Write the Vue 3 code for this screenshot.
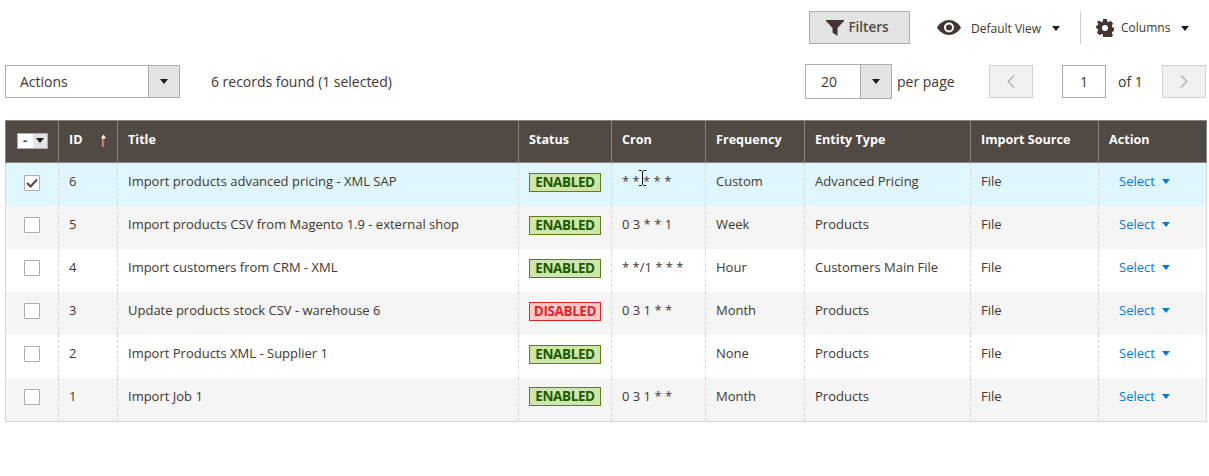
<template>
  <div class="grid-page">
    <div class="toolbar-top">
      <button class="btn-filters">
        <svg class="filter-icon" width="18" height="16" viewBox="0 0 18 16"><path d="M0 0h18v1l-6.500 7v8L6.500 12.500V8L0 1z" fill="#41362f" /></svg>
        Filters
      </button>
      <div class="view-switch">
        <svg width="24" height="15" viewBox="0 0 24 15"><path d="M12 0C7 0 2.500 3.200 0 7.500 2.500 11.800 7 15 12 15s9.500-3.200 12-7.500C21.500 3.200 17 0 12 0z" fill="#41362f" /><circle cx="12" cy="7.500" r="5" fill="#fff" /><circle cx="12" cy="7.500" r="3" fill="#41362f" /></svg>
        <span class="view-label">Default View</span>
        <span class="caret"></span>
      </div>
      <div class="columns-switch">
        <svg width="18" height="18" viewBox="0 0 18 18"><path d="M7 0h4l.5 2.500 1.500.7 2.200-1.400 2.800 2.800-1.400 2.200.6 1.500 2.300.7v3l-2.300.7-.6 1.500 1.400 2.200-2.800 2.800-2.200-1.400-1.500.6L11 18H7l-.5-2.500-1.500-.6-2.200 1.400L0 13.500l1.400-2.200-.6-1.500L-1 9V7l1.800-.7.6-1.500L0 2.600 2.800 1.800 5 3.200l1.500-.7z" transform="translate(1 0) scale(.89 1)" fill="#41362f" /><circle cx="9" cy="9" r="3" fill="#fff" /></svg>
        <span class="view-label">Columns</span>
        <span class="caret"></span>
      </div>
    </div>

    <div class="toolbar-bottom">
      <div class="actions-select">
        <span class="actions-label">Actions</span>
        <span class="select-arrow"><span class="caret"></span></span>
      </div>
      <div class="records">6 records found (1 selected)</div>
      <div class="pager">
        <div class="perpage-select">
          <span class="perpage-value">20</span>
          <span class="select-arrow"><span class="caret"></span></span>
        </div>
        <span class="perpage-label">per page</span>
        <button class="page-btn">
          <svg width="8" height="13" viewBox="0 0 8 13"><path d="M7 .5 1.200 6.500 7 12.500" fill="none" stroke="#b5b0ac" stroke-width="1.400" /></svg>
        </button>
        <div class="page-input">1</div>
        <span class="page-of">of 1</span>
        <button class="page-btn page-next">
          <svg width="8" height="13" viewBox="0 0 8 13"><path d="M1 .5 6.800 6.500 1 12.500" fill="none" stroke="#b5b0ac" stroke-width="1.400" /></svg>
        </button>
      </div>
    </div>

    <table class="data-grid">
      <colgroup>
        <col v-for="w in colWidths" :key="w.key" :style="{ width: w.width + 'px' }" />
      </colgroup>
      <thead>
        <tr>
          <th class="th-check">
            <span class="mass-select"><span class="mass-dash">-</span><span class="mass-arrow"><span class="caret"></span></span></span>
          </th>
          <th class="th-id">
            ID
            <svg class="sort-arrow" width="7" height="13" viewBox="0 0 7 13"><path d="M3 13V2" stroke="#fff" stroke-width="1" fill="none" /><path d="M4 13V2" stroke="#e22626" stroke-width="1" fill="none" /><path d="M1 4.500 3.500.5 6 4.500z" fill="#fff" /></svg>
          </th>
          <th>Title</th>
          <th>Status</th>
          <th>Cron</th>
          <th>Frequency</th>
          <th>Entity Type</th>
          <th>Import Source</th>
          <th>Action</th>
        </tr>
      </thead>
      <tbody>
        <tr v-for="(job, i) in jobs" :key="job.id" :class="{ selected: job.checked, odd: i % 2 === 1 && !job.checked }">
          <td class="td-check">
            <span class="checkbox">
              <svg v-if="job.checked" width="12" height="10" viewBox="0 0 12 10"><path d="M1 5l3.500 3.500L11 1.500" fill="none" stroke="#514943" stroke-width="2" /></svg>
            </span>
          </td>
          <td>{{ job.id }}</td>
          <td>{{ job.title }}</td>
          <td class="td-status"><span class="status" :class="job.enabled ? 'on' : 'off'">{{ job.enabled ? 'ENABLED' : 'DISABLED' }}</span></td>
          <td>{{ job.cron }}</td>
          <td>{{ job.frequency }}</td>
          <td>{{ job.entity }}</td>
          <td>File</td>
          <td class="td-action">Select<span class="caret-blue"></span></td>
        </tr>
      </tbody>
    </table>

    <svg class="ibeam" width="9" height="16" viewBox="0 0 9 16"><path d="M1 .5h2.500L4.500 1.500 5.500.5H8M4.500 1.500v13M1 15.500h2.500l1-1 1 1H8" fill="none" stroke="#111" stroke-width="1" /></svg>
  </div>
</template>

<script setup>
const colWidths = [53, 59, 401, 93, 94, 99, 166, 128, 108].map((width, key) => ({ width, key }))

const jobs = [
  { id: 6, checked: true, title: 'Import products advanced pricing - XML SAP', enabled: true, cron: '* * * * *', frequency: 'Custom', entity: 'Advanced Pricing' },
  { id: 5, title: 'Import products CSV from Magento 1.9 - external shop', enabled: true, cron: '0 3 * * 1', frequency: 'Week', entity: 'Products' },
  { id: 4, title: 'Import customers from CRM - XML', enabled: true, cron: '* */1 * * *', frequency: 'Hour', entity: 'Customers Main File' },
  { id: 3, title: 'Update products stock CSV - warehouse 6', enabled: false, cron: '0 3 1 * *', frequency: 'Month', entity: 'Products' },
  { id: 2, title: 'Import Products XML - Supplier 1', enabled: true, cron: '', frequency: 'None', entity: 'Products' },
  { id: 1, title: 'Import Job 1', enabled: true, cron: '0 3 1 * *', frequency: 'Month', entity: 'Products' },
]
</script>

<style scoped>
.grid-page {
  position: relative;
  width: 1209px;
  height: 476px;
  overflow: hidden;
  background: #fff;
  font-family: "Open Sans", "Liberation Sans", sans-serif;
  font-size: 13px;
  color: #41362f;
  box-sizing: border-box;
  padding-top: 11px;
}

.caret {
  display: inline-block;
  width: 0;
  height: 0;
  border-left: 4.500px solid transparent;
  border-right: 4.500px solid transparent;
  border-top: 5px solid #1a1a1a;
}

.toolbar-top {
  display: flex;
  align-items: center;
  height: 33px;
  padding-left: 809px;
}

.btn-filters {
  display: flex;
  align-items: center;
  justify-content: center;
  gap: 4px;
  width: 101px;
  height: 33px;
  box-sizing: border-box;
  border: 1px solid #adadad;
  background: #e3e3e3;
  font: 600 13.500px "Open Sans", sans-serif;
  color: #514943;
  padding: 0 4px 2px 0;
}

.filter-icon {
  margin-top: 3px;
}

.view-switch {
  display: flex;
  align-items: center;
  margin-left: 27px;
  width: 144px;
  height: 33px;
  border-right: 1px solid #ccc;
  box-sizing: border-box;
}

.view-switch .view-label {
  margin-left: 10px;
  font-size: 12px;
  padding-top: 1px;
}

.view-switch .caret {
  margin-left: 11px;
  margin-top: 2px;
}

.columns-switch {
  display: flex;
  align-items: center;
  margin-left: 15px;
}

.columns-switch .view-label {
  margin-left: 7px;
  font-size: 12px;
}

.columns-switch .caret {
  margin-left: 11px;
  margin-top: 2px;
}

.toolbar-bottom {
  display: flex;
  align-items: center;
  height: 33px;
  margin-top: 21px;
  padding-left: 5px;
}

.actions-select {
  display: flex;
  width: 175px;
  height: 33px;
  box-sizing: border-box;
  border: 1px solid #adadad;
  background: #fff;
}

.actions-label {
  flex: 1;
  padding-left: 14px;
  line-height: 31px;
  font-size: 14px;
}

.select-arrow {
  display: flex;
  align-items: center;
  justify-content: center;
  width: 30px;
  background: #e3e3e3;
  border-left: 1px solid #adadad;
}

.records {
  margin-left: 31px;
  font-size: 14px;
  letter-spacing: -0.02px;
}

.pager {
  display: flex;
  align-items: center;
  margin-left: auto;
  padding-right: 3px;
}

.perpage-select {
  display: flex;
  width: 87px;
  height: 35px;
  box-sizing: border-box;
  border: 1px solid #adadad;
}

.perpage-value {
  flex: 1;
  padding-left: 15px;
  line-height: 33px;
  font-size: 14px;
}

.perpage-label {
  margin-left: 5px;
  font-size: 14px;
  width: 92px;
}

.page-btn {
  width: 44px;
  height: 33px;
  box-sizing: border-box;
  border: 1px solid #d1d1d1;
  background: #f0f0f0;
  padding: 0;
  display: flex;
  align-items: center;
  justify-content: center;
}

.page-input {
  width: 44px;
  height: 33px;
  margin-left: 29px;
  box-sizing: border-box;
  border: 1px solid #adadad;
  text-align: center;
  line-height: 31px;
  font-size: 14px;
}

.page-of {
  margin-left: 12px;
  font-size: 14px;
  width: 44px;
}

.data-grid {
  table-layout: fixed;
  border-collapse: collapse;
  width: 1201px;
  margin: 22px 0 0 5px;
  border-bottom: 1px solid #d6d6d6;
}

.data-grid th {
  height: 42px;
  box-sizing: border-box;
  background: #514943;
  color: #fff;
  font-weight: 700;
  font-size: 12.600px;
  text-align: left;
  padding: 0 10px 4px;
  border: 1px solid #8a837f;
}

.data-grid td {
  height: 43px;
  box-sizing: border-box;
  padding: 0 10px 6px;
  font-size: 13px;
  color: #41362f;
  border-left: 1px dashed #d6d6d6;
  border-right: 1px dashed #d6d6d6;
  background: #fff;
  white-space: nowrap;
}

.data-grid tr:last-child td {
  height: 44px;
  padding-bottom: 7px;
}

.data-grid td:first-child {
  border-left: 1px solid #d6d6d6;
}

.data-grid td:last-child {
  border-right: 1px solid #d6d6d6;
}

.data-grid tr.odd td {
  background: #f5f5f5;
}

.data-grid tr.selected td {
  background: #e0f6fe;
}

.data-grid .th-check {
  text-align: center;
  padding: 0 0 3px;
}

.data-grid .td-check {
  text-align: center;
  padding: 0 0 6px;
}

.data-grid .td-status {
  padding-bottom: 5px;
}

.data-grid tr:last-child .td-status {
  padding-bottom: 6px;
}

.th-id {
  position: relative;
}

.sort-arrow {
  position: absolute;
  right: 10px;
  top: 13px;
}

.mass-select {
  display: inline-flex;
  vertical-align: middle;
  width: 31px;
  height: 16px;
  background: #fff;
  border: 1px solid #adadad;
  box-sizing: border-box;
}

.mass-dash {
  width: 15px;
  color: #41362f;
  font-size: 13px;
  font-weight: 700;
  line-height: 13px;
  text-align: center;
}

.mass-arrow {
  flex: 1;
  display: flex;
  align-items: center;
  justify-content: center;
  background: #e3e3e3;
}

.checkbox {
  display: inline-flex;
  align-items: center;
  justify-content: center;
  vertical-align: middle;
  width: 16px;
  height: 16px;
  box-sizing: border-box;
  border: 1px solid #adadad;
  border-radius: 1px;
  background: #fff;
}

.status {
  display: inline-block;
  width: 72px;
  height: 19px;
  box-sizing: border-box;
  text-align: center;
  font-weight: 700;
  font-size: 13.500px;
  letter-spacing: -0.4px;
  line-height: 17px;
  vertical-align: middle;
}

.status.on {
  background: #d0e5a9;
  border: 1px solid #5b8116;
  color: #185b00;
}

.status.off {
  background: #ffcccc;
  border: 1px solid #e22626;
  color: #e22626;
}

.data-grid .td-action {
  padding-left: 20px;
  color: #007bdb;
}

.caret-blue {
  display: inline-block;
  width: 0;
  height: 0;
  margin-left: 7px;
  margin-bottom: 2px;
  border-left: 4px solid transparent;
  border-right: 4px solid transparent;
  border-top: 5px solid #007bdb;
}

.ibeam {
  position: absolute;
  left: 638px;
  top: 170px;
}
</style>
